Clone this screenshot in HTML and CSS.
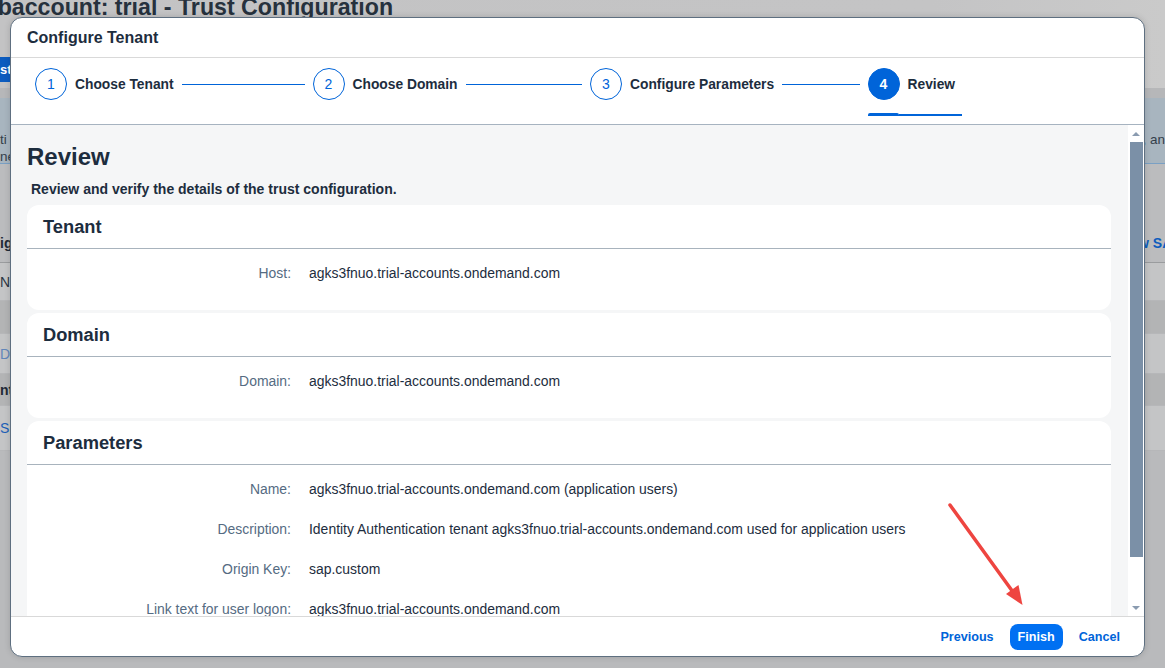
FILE: index.html
```html
<!DOCTYPE html>
<html lang="en">
<head>
<meta charset="utf-8">
<title>Configure Tenant</title>
<link rel="stylesheet" href="styles.css">
</head>
<body>
<div class="page">
  <div class="top">
    <h1 class="page-title">Subaccount: trial - Trust Configuration</h1>
    <div class="toolbar"><span class="bg-btn">st</span></div>
  </div>
  <div class="band"></div>
  <div class="info-strip">
    <div class="info-left"><span>ti</span><span>ne</span></div>
    <div class="info-right">, an</div>
  </div>
  <div class="tbl-head"><span class="th-left">ig</span><span class="th-right">New SAML Trust Configuration</span></div>
  <div class="tbl-row r1"><span>N</span></div>
  <div class="tbl-row r2 alt"></div>
  <div class="tbl-row r3"><span class="link-faded">D</span></div>
  <div class="tbl-row r4 alt"><span class="strong">nt</span></div>
  <div class="tbl-row r5"><span class="link">S</span></div>
</div>

<div class="dialog">
  <header class="dlg-header">Configure Tenant</header>
  <nav class="wizard">
    <div class="step">
      <span class="circle">1</span><span class="step-label">Choose Tenant</span><span class="step-line"></span>
    </div>
    <div class="step">
      <span class="circle">2</span><span class="step-label">Choose Domain</span><span class="step-line"></span>
    </div>
    <div class="step">
      <span class="circle">3</span><span class="step-label">Configure Parameters</span><span class="step-line"></span>
    </div>
    <div class="step-active">
      <div class="step-main">
        <span class="circle filled">4</span><span class="step-label last">Review</span>
      </div>
      <div class="underline"><span class="u-thick"></span><span class="u-thin"></span></div>
    </div>
  </nav>
  <div class="content">
    <div class="scroll-area">
      <h2 class="review-title">Review</h2>
      <p class="review-sub">Review and verify the details of the trust configuration.</p>

      <section class="card">
        <h3 class="card-title">Tenant</h3>
        <div class="card-body">
          <span class="lbl">Host:</span><span class="val">agks3fnuo.trial-accounts.ondemand.com</span>
        </div>
      </section>

      <section class="card">
        <h3 class="card-title">Domain</h3>
        <div class="card-body">
          <span class="lbl">Domain:</span><span class="val">agks3fnuo.trial-accounts.ondemand.com</span>
        </div>
      </section>

      <section class="card">
        <h3 class="card-title">Parameters</h3>
        <div class="card-body">
          <span class="lbl">Name:</span><span class="val">agks3fnuo.trial-accounts.ondemand.com (application users)</span>
          <span class="lbl">Description:</span><span class="val">Identity Authentication tenant agks3fnuo.trial-accounts.ondemand.com used for application users</span>
          <span class="lbl">Origin Key:</span><span class="val">sap.custom</span>
          <span class="lbl">Link text for user logon:</span><span class="val">agks3fnuo.trial-accounts.ondemand.com</span>
        </div>
      </section>
    </div>
    <div class="scrollbar">
      <span class="sb-btn"><span class="tri-up"></span></span>
      <span class="sb-thumb"></span>
      <span class="sb-space"></span>
      <span class="sb-btn"><span class="tri-down"></span></span>
    </div>
  </div>
  <footer class="dlg-footer">
    <button class="btn">Previous</button>
    <button class="btn primary">Finish</button>
    <button class="btn">Cancel</button>
  </footer>
</div>

<svg class="annot" width="1165" height="668" viewBox="0 0 1165 668" aria-hidden="true">
  <line x1="950" y1="505" x2="1013" y2="592" stroke="#ee4540" stroke-width="3.5" stroke-linecap="round"/>
  <polygon points="1022.5,605 1006,594 1018.5,585" fill="#ee4540"/>
</svg>
</body>
</html>
```

FILE: styles.css
```css
* { box-sizing: border-box; }

body {
  margin: 0;
  width: 1165px;
  height: 668px;
  overflow: hidden;
  position: relative;
  background: #b9babc;
  font-family: "Liberation Sans", Arial, sans-serif;
  color: #1d2d3e;
}

/* ---------- dimmed background page ---------- */
.page { width: 100%; }

.top {
  height: 88px;
  background: linear-gradient(90deg, #c3c3c4 0%, #c4c4c5 80%, #cacaca 100%);
  overflow: hidden;
}

.page-title {
  margin: -5px 0 0 -32px;
  font-size: 23.2px;
  line-height: 24px;
  font-weight: bold;
  color: #26313d;
  white-space: nowrap;
}

.toolbar {
  margin-top: 38px;
  height: 25px;
  display: flex;
}

.bg-btn {
  background: #0c5cbf;
  color: #fff;
  font-size: 13px;
  font-weight: bold;
  line-height: 25px;
  padding-right: 12px;
}

.band { height: 10px; background: #b6b7b9; }

.info-strip {
  height: 66px;
  background: #a8b5bf;
  border-bottom: 1px solid #7aa0c4;
  display: flex;
  justify-content: space-between;
  font-size: 13.5px;
  color: #34404b;
  padding-top: 33px;
}

.info-left { display: flex; flex-direction: column; line-height: 17px; }
.info-right { line-height: 17px; }

.tbl-head {
  height: 99px;
  background: #bbbcbe;
  border-bottom: 1px solid #9a9c9e;
  display: flex;
  justify-content: space-between;
  align-items: flex-end;
  padding-bottom: 10px;
  font-size: 14px;
  font-weight: bold;
  line-height: 18px;
  overflow: hidden;
}

.th-left { color: #1f2a36; }
.th-right {
  color: #0d5cbd;
  white-space: nowrap;
  margin-right: -161px;
}

.tbl-row {
  display: flex;
  align-items: center;
  background: #c4c5c6;
  border-bottom: 1px solid #b6b7b9;
  font-size: 14px;
  color: #2b3642;
}
.tbl-row.alt { background: #b3b4b5; }
.r1 { height: 38px; }
.r2 { height: 33px; }
.r3 { height: 40px; }
.r4 { height: 32px; }
.r5 { height: 45px; }
.link-faded { color: #6186ba; }
.link { color: #1d60b7; }
.strong { font-weight: bold; color: #1f2a36; }

/* ---------- dialog ---------- */
.dialog {
  position: absolute;
  left: 10px;
  top: 17px;
  width: 1135px;
  height: 640px;
  background: #fff;
  border: 1px solid #5e6f80;
  border-radius: 12px;
  overflow: hidden;
  display: flex;
  flex-direction: column;
  box-shadow: 0 0 6px rgba(0, 0, 0, 0.15);
}

.dlg-header {
  flex: 0 0 40px;
  border-bottom: 1px solid #d9d9d9;
  padding: 0 16px;
  font-size: 16px;
  font-weight: bold;
  line-height: 39px;
  color: #1d2d3e;
}

.wizard {
  flex: 0 0 67px;
  border-bottom: 1px solid #a6b3c0;
  display: flex;
  align-items: flex-start;
  padding: 10px 0 0 24px;
}

.step {
  flex: 0 0 277.5px;
  display: flex;
  align-items: center;
  height: 32px;
}

.circle {
  flex: 0 0 32px;
  width: 32px;
  height: 32px;
  border: 1px solid #0064d9;
  border-radius: 50%;
  display: flex;
  align-items: center;
  justify-content: center;
  font-size: 14px;
  color: #0064d9;
}

.circle.filled {
  background: #0064d9;
  color: #fff;
  font-weight: bold;
}

.step-label {
  margin: 0 8px;
  font-size: 13.8px;
  font-weight: bold;
  color: #1d2d3e;
  white-space: nowrap;
}
.step-label.last { margin-right: 7px; }

.step-line {
  flex: 1;
  height: 1px;
  background: #0064d9;
  margin-right: 8px;
}

.step-active {
  display: flex;
  flex-direction: column;
}

.step-main {
  display: flex;
  align-items: center;
  height: 32px;
}

.underline {
  margin-top: 13px;
  display: flex;
  align-items: flex-end;
  height: 3px;
}

.u-thick {
  flex: 0 0 31px;
  height: 3px;
  background: #0064d9;
  border-radius: 2px 2px 0 0;
}

.u-thin {
  flex: 1;
  height: 2px;
  background: #0064d9;
}

/* ---------- content ---------- */
.content {
  flex: 1;
  min-height: 0;
  display: flex;
  background: #f5f6f7;
}

.scroll-area {
  flex: 1;
  overflow: hidden;
  padding: 0 17px 0 16px;
}

.review-title {
  margin: 17px 0 0;
  font-size: 24px;
  line-height: 30px;
  font-weight: bold;
  color: #1d2d3e;
}

.review-sub {
  margin: 8px 0 7px;
  padding-left: 4px;
  font-size: 14px;
  line-height: 18px;
  font-weight: bold;
  color: #1d2d3e;
}

.card {
  background: #fff;
  border-radius: 12px;
  margin-bottom: 3px;
}

.card-title {
  margin: 0;
  height: 44px;
  border-bottom: 1px solid #a8b3bd;
  padding-left: 16px;
  font-size: 18.3px;
  line-height: 43px;
  font-weight: bold;
  color: #1d2d3e;
}

.card-body {
  display: grid;
  grid-template-columns: 264px 1fr;
  column-gap: 18px;
  row-gap: 16px;
  padding: 12px 0 25px;
  font-size: 13.95px;
  line-height: 24px;
}

.lbl {
  text-align: right;
  color: #556b82;
  white-space: nowrap;
}

.val {
  color: #1d2d3e;
  white-space: nowrap;
}

/* fake scrollbar */
.scrollbar {
  flex: 0 0 16px;
  background: #fff;
  display: flex;
  flex-direction: column;
  align-items: center;
}

.sb-btn {
  flex: 0 0 17px;
  width: 16px;
  display: flex;
  align-items: center;
  justify-content: center;
}

.tri-up, .tri-down {
  width: 0;
  height: 0;
  border-left: 4px solid transparent;
  border-right: 4px solid transparent;
}
.tri-up { border-bottom: 4px solid #8a9bb0; }
.tri-down { border-top: 4px solid #8a9bb0; }

.sb-thumb {
  flex: 0 0 415px;
  width: 13px;
  background: #7b90a7;
}

.sb-space { flex: 1; }

/* ---------- footer ---------- */
.dlg-footer {
  flex: 0 0 40px;
  border-top: 1px solid #d9d9d9;
  display: flex;
  align-items: center;
  justify-content: flex-end;
  gap: 8px;
  padding-right: 16px;
}

.btn {
  height: 26px;
  padding: 0 8px;
  border: none;
  border-radius: 8px;
  background: transparent;
  font-family: "Liberation Sans", Arial, sans-serif;
  font-size: 12.6px;
  font-weight: bold;
  color: #0064d9;
}

.btn.primary {
  background: #0070f2;
  color: #fff;
}

/* ---------- annotation ---------- */
.annot {
  position: absolute;
  left: 0;
  top: 0;
  pointer-events: none;
}
```
